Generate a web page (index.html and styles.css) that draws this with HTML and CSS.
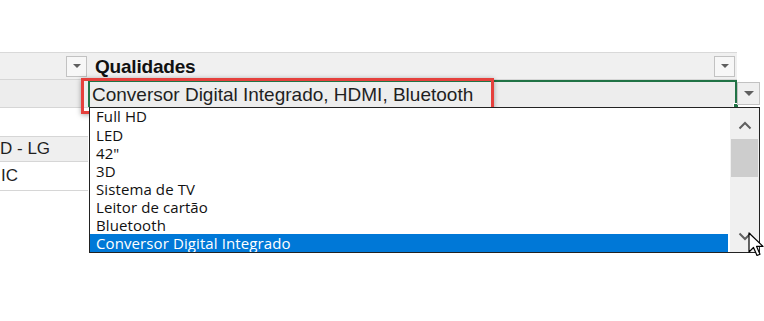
FILE: index.html
```html
<!DOCTYPE html>
<html lang="pt">
<head>
<meta charset="utf-8">
<link rel="stylesheet" href="styles.css">
</head>
<body>
<div class="sheet">
  <div class="row row-head">
    <div class="cell col-a"><span class="filter-btn"><span class="tri"></span></span></div>
    <div class="cell col-b head-b">
      <span class="head-title">Qualidades</span>
      <span class="filter-btn"><span class="tri"></span></span>
    </div>
  </div>
  <div class="row row-sel">
    <div class="cell col-a"></div>
    <div class="cell col-b active-cell">
      <span class="cell-text">Conversor Digital Integrado, HDMI, Bluetooth</span>
      <span class="fill-handle"></span>
    </div>
    <span class="dd-btn"><span class="tri"></span></span>
  </div>
  <div class="row row-white">
    <div class="cell col-a"></div>
  </div>
  <div class="row row-grey">
    <div class="cell col-a cell-data">D - LG</div>
  </div>
  <div class="row row-white">
    <div class="cell col-a cell-data cell-ic">IC</div>
  </div>

  <div class="highlight-box"></div>

  <div class="listbox">
    <ul class="items">
      <li>Full HD</li>
      <li>LED</li>
      <li>42"</li>
      <li>3D</li>
      <li>Sistema de TV</li>
      <li>Leitor de cartão</li>
      <li>Bluetooth</li>
      <li class="selected">Conversor Digital Integrado</li>
    </ul>
    <div class="scrollbar">
      <svg class="chev" width="14" height="9" viewBox="0 0 14 9"><path d="M1.5 7.5 L7 2 L12.5 7.5" fill="none" stroke="#606060" stroke-width="2"/></svg>
      <div class="thumb"></div>
      <div class="track"></div>
      <svg class="chev" width="14" height="9" viewBox="0 0 14 9"><path d="M1.5 1.5 L7 7 L12.5 1.5" fill="none" stroke="#606060" stroke-width="2"/></svg>
    </div>
  </div>

  <svg class="cursor" width="18" height="27" viewBox="0 0 18 27"><path d="M1 1 L1 20 L5.5 15.5 L9 23.5 L12 22.2 L8.6 14.4 L15 14.4 Z" fill="#fff" stroke="#000" stroke-width="1.2" stroke-linejoin="round"/></svg>
</div>
</body>
</html>
```
FILE: styles.css
```css
* { box-sizing: border-box; }
html, body { margin: 0; padding: 0; background: #fff; }
body { width: 764px; height: 321px; overflow: hidden; font-family: "Open Sans", "Noto Sans", sans-serif; }

.sheet { position: relative; padding-top: 52px; }

.row { display: flex; border-bottom: 1px solid #d6d6d6; }
.row-head { height: 28px; background: #f0f0f0; border-top: 1px solid #d9d9d9; width: 737px; }
.row-sel { height: 28px; background: #ededed; width: 737px; position: relative; }
.row-white { height: 29px; width: 88px; }
.row-grey { height: 25px; width: 88px; background: #efefef; }
.row-white:last-child { height: 25px; }

.cell { height: 100%; display: flex; align-items: center; }
.col-a { width: 88px; flex: none; justify-content: flex-end; }
.col-b { flex: 1; }

.head-b { justify-content: space-between; padding-left: 7px; padding-right: 2px; }
.head-title { font-family: "Liberation Sans", Arial, sans-serif; font-weight: bold; font-size: 19px; color: #111; letter-spacing: -0.2px; padding-top: 1px; }

.filter-btn { width: 21px; height: 21px; border: 1px solid #c2c2c2; background: #f7f7f7; display: flex; align-items: center; justify-content: center; }
.col-a .filter-btn { margin-right: 1px; }
.tri { width: 0; height: 0; border-left: 4px solid transparent; border-right: 4px solid transparent; border-top: 4px solid #5f5f5f; }

.active-cell { border: 2px solid #217346; border-bottom: none; padding-left: 2px; position: relative; }
.cell-text { font-family: "Liberation Sans", Arial, sans-serif; font-size: 19px; color: #1f1f1f; }
.fill-handle { position: absolute; right: -4px; bottom: -2px; width: 6px; height: 6px; background: #217346; border: 1px solid #fff; }

.dd-btn { position: absolute; left: 737px; top: 2px; width: 23px; height: 23px; border: 1px solid #c2c2c2; background: #efefef; display: flex; align-items: center; justify-content: center; }
.dd-btn .tri { border-left-width: 5px; border-right-width: 5px; border-top-width: 5px; }

.cell-data { justify-content: flex-start; font-family: "Liberation Sans", Arial, sans-serif; font-size: 17px; color: #1f1f1f; }
.cell-ic { padding-left: 1px; }

.highlight-box { position: absolute; left: 81px; top: 78px; width: 413px; height: 36px; border: 3px solid #e5403c; box-shadow: 0 1px 5px rgba(0,0,0,0.35); }

.listbox { position: absolute; left: 89px; top: 107px; width: 671px; height: 146px; border: 1px solid #222; background: #fff; display: flex; }
.items { list-style: none; margin: 0; padding: 0; flex: 1; overflow: hidden; }
.items li { height: 18px; line-height: 18px; padding-left: 6px; font-family: "Open Sans", sans-serif; font-size: 15px; letter-spacing: 0.1px; color: #111; white-space: nowrap; }
.items li:first-child { line-height: 17px; }
.items li.selected { background: #0078d7; color: #fff; margin-right: 2px; }

.scrollbar { width: 29px; flex: none; background: #f0f0f0; display: flex; flex-direction: column; align-items: center; }
.chev { margin-top: 13px; flex: none; }
.scrollbar .chev:last-child { margin-top: 0; margin-bottom: 11px; }
.thumb { width: 27px; height: 38px; background: #cdcdcd; margin-top: 9px; flex: none; }
.track { flex: 1; }

.cursor { position: absolute; left: 748px; top: 232px; }
```
